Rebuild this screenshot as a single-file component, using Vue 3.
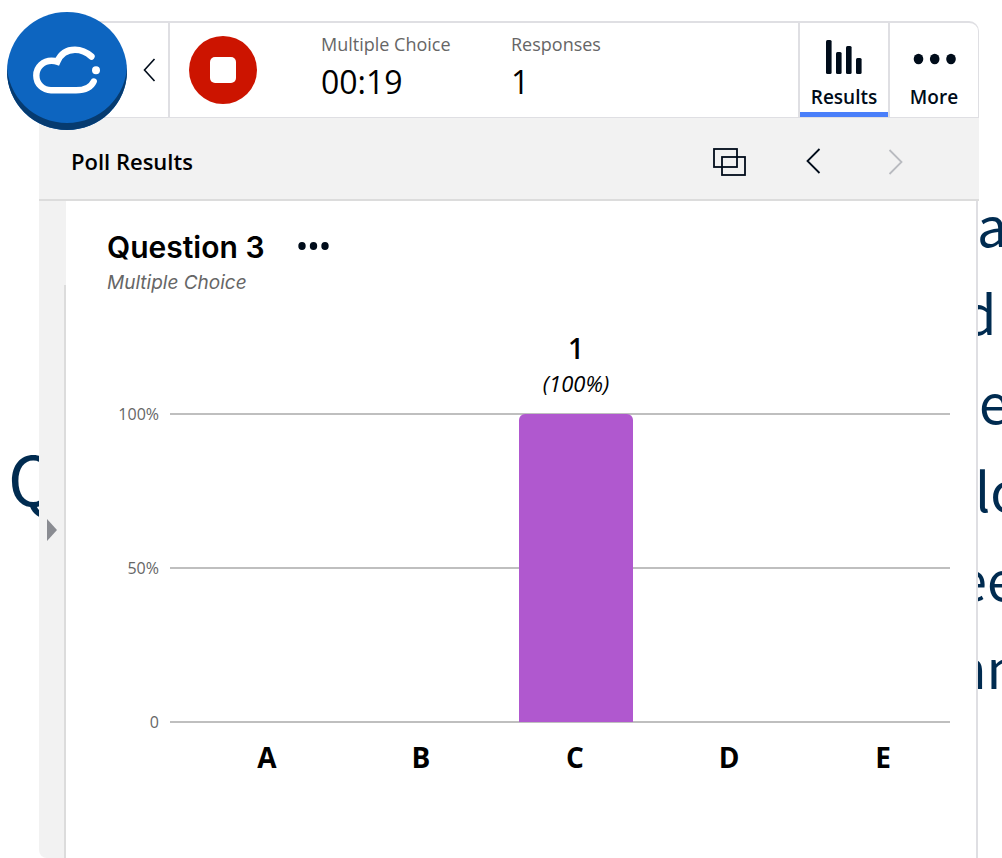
<template>
  <div class="desktop">
    <div class="slide">
      <span class="slide-title">Q</span>
      <span
        v-for="line in slideLines"
        :key="line.top"
        class="slide-line"
        :style="{ left: line.left + 'px', top: line.top + 'px' }"
      >{{ line.text }}</span>
    </div>

    <div class="poll-panel">
      <header class="toolbar">
        <div class="toolbar-start">
          <button class="collapse-btn" aria-label="Collapse">
            <svg width="14" height="24" viewBox="0 0 14 24" fill="none" stroke="currentColor" stroke-width="1.6">
              <path d="M12.5 1L2.5 12L12.5 23"/>
            </svg>
          </button>
        </div>

        <div class="session">
          <button class="stop-btn" aria-label="Stop">
            <span class="stop-icon"></span>
          </button>
          <div class="stat">
            <span class="stat-label">Multiple Choice</span>
            <span class="stat-value">00:19</span>
          </div>
          <div class="stat">
            <span class="stat-label">Responses</span>
            <span class="stat-value">1</span>
          </div>
        </div>

        <button class="tab active">
          <svg width="36" height="34" viewBox="0 0 36 34" fill="currentColor">
            <rect x="0" y="0" width="5.6" height="34" rx="1.5"/>
            <rect x="10" y="12" width="5.6" height="22" rx="1.5"/>
            <rect x="20" y="6" width="5.6" height="28" rx="1.5"/>
            <rect x="30" y="18" width="5.6" height="16" rx="1.5"/>
          </svg>
          <span>Results</span>
        </button>
        <button class="tab">
          <svg width="44" height="34" viewBox="0 0 44 34" fill="currentColor">
            <ellipse cx="6.5" cy="19" rx="4.8" ry="5.2"/>
            <ellipse cx="22.7" cy="19" rx="4.8" ry="5.2"/>
            <ellipse cx="39" cy="19" rx="4.8" ry="5.2"/>
          </svg>
          <span>More</span>
        </button>
      </header>

      <div class="subheader">
        <h2>Poll Results</h2>
        <div class="subheader-actions">
          <button aria-label="Compare">
            <svg width="34" height="30" viewBox="0 0 34 30" fill="none" stroke="currentColor" stroke-width="1.8">
              <rect x="2" y="3" width="23" height="18"/>
              <rect x="10" y="11" width="23" height="18"/>
            </svg>
          </button>
          <button aria-label="Previous">
            <svg width="34" height="30" viewBox="0 0 34 30" fill="none" stroke="currentColor" stroke-width="1.8">
              <path d="M24.5 3L12.5 15L24.5 27"/>
            </svg>
          </button>
          <button aria-label="Next" disabled>
            <svg width="34" height="30" viewBox="0 0 34 30" fill="none" stroke="currentColor" stroke-width="1.8">
              <path d="M11.5 4L23.5 16L11.5 28"/>
            </svg>
          </button>
        </div>
      </div>

      <div class="panel-body">
        <aside class="side-rail">
          <button class="expand-btn" aria-label="Expand">
            <svg width="10" height="22" viewBox="0 0 10 22" fill="currentColor">
              <path d="M0 0L10 11L0 22Z"/>
            </svg>
          </button>
        </aside>

        <main class="results">
          <div class="question-head">
            <h1>Question 3</h1>
            <button class="question-menu" aria-label="Question options">
              <svg width="32" height="10" viewBox="0 0 32 10" fill="currentColor">
                <ellipse cx="4" cy="4" rx="3.7" ry="4"/>
                <ellipse cx="15.5" cy="4" rx="3.7" ry="4"/>
                <ellipse cx="27" cy="4" rx="3.7" ry="4"/>
              </svg>
            </button>
          </div>
          <p class="question-type">Multiple Choice</p>

          <div class="chart">
            <div class="y-axis">
              <span v-for="tick in ticks" :key="tick">{{ tick }}</span>
            </div>
            <div class="plot">
              <div class="grid-lines">
                <i v-for="tick in ticks" :key="tick"></i>
              </div>
              <div class="bars">
                <div v-for="choice in choices" :key="choice.label" class="bar-slot">
                  <div v-if="choice.count" class="bar" :style="{ height: percent(choice) + '%' }">
                    <div class="bar-label">
                      <strong>{{ choice.count }}</strong>
                      <em>({{ percent(choice) }}%)</em>
                    </div>
                  </div>
                </div>
              </div>
            </div>
            <div class="x-axis">
              <span v-for="choice in choices" :key="choice.label">{{ choice.label }}</span>
            </div>
          </div>
        </main>
      </div>
    </div>

    <button class="launcher" aria-label="Menu">
      <svg viewBox="0 0 120 118" fill="none" stroke="#fff" stroke-width="6.4" stroke-linecap="round">
        <path d="M84.5 44.5C79.5 40 74 37.7 68 37.7C60 37.7 53.5 42 50.3 49.7C48.5 49 46.5 48.8 44.5 48.8C36.5 48.8 29.3 55 29.3 63.5C29.3 72 36 78.3 44 78.3H69C77 78.3 84 75.5 86.7 69.5"/>
        <circle cx="89" cy="58.3" r="4" fill="#fff" stroke="none"/>
      </svg>
    </button>
  </div>
</template>

<script setup>
import { ref, computed } from 'vue'

const ticks = ['100%', '50%', '0']

const choices = ref([
  { label: 'A', count: 0 },
  { label: 'B', count: 0 },
  { label: 'C', count: 1 },
  { label: 'D', count: 0 },
  { label: 'E', count: 0 }
])

const slideLines = [
  { text: 'a', left: 977, top: 180 },
  { text: 'd', left: 963, top: 268 },
  { text: 'e', left: 979, top: 357 },
  { text: 'lo', left: 975, top: 445 },
  { text: 'ee', left: 957, top: 534 },
  { text: 'an', left: 956, top: 622 }
]

const total = computed(() => choices.value.reduce((sum, c) => sum + c.count, 0))

function percent(choice) {
  return total.value ? Math.round((choice.count / total.value) * 100) : 0
}
</script>

<style>
body {
  margin: 0;
  background: #fff;
}
</style>

<style scoped>
.desktop {
  position: relative;
  display: flex;
  min-height: 100vh;
  box-sizing: border-box;
  padding: 21px 23px 0 39px;
  overflow: hidden;
  font-family: "Open Sans", "Noto Sans", sans-serif;
  color: #000;
}

button {
  padding: 0;
  border: none;
  background: none;
  font: inherit;
  color: #000c1a;
  cursor: pointer;
}

svg {
  display: block;
}

/* Slide behind the panel */
.slide {
  position: absolute;
  inset: 0;
  overflow: hidden;
  color: #002b50;
  font-family: "Noto Sans CJK SC", "Noto Sans", sans-serif;
}

.slide-title {
  position: absolute;
  left: 8px;
  top: 429px;
  font-size: 68px;
  line-height: 96px;
}

.slide-line {
  position: absolute;
  font-size: 54px;
  line-height: 88px;
}

.poll-panel {
  position: relative;
  flex: 1;
  display: flex;
  flex-direction: column;
}

.toolbar {
  display: flex;
  height: 94px;
  border: 1px solid #dfdfe3;
  border-top-width: 2px;
  border-top-right-radius: 10px;
  background: #fff;
}

.toolbar-start {
  width: 128px;
  display: flex;
  align-items: center;
  justify-content: flex-end;
  border-right: 2px solid #dfdfe3;
}

.collapse-btn {
  margin-right: 12px;
}

.session {
  flex: 1;
  display: flex;
  align-items: center;
  padding-left: 19px;
}

.stop-btn {
  width: 68px;
  height: 68px;
  margin-right: 64px;
  display: flex;
  align-items: center;
  justify-content: center;
  border-radius: 50%;
  background: #cc1400;
}

.stop-icon {
  width: 26px;
  height: 26px;
  border-radius: 5px;
  background: #fff;
}

.stat {
  width: 190px;
  display: flex;
  flex-direction: column;
  padding-bottom: 8px;
}

.stat-label {
  font-size: 18px;
  line-height: 32px;
  color: #666;
}

.stat-value {
  font-size: 32px;
  line-height: 44px;
}

.tab {
  width: 90px;
  box-sizing: border-box;
  display: flex;
  flex-direction: column;
  align-items: center;
  padding-top: 17px;
  border-left: 2px solid #dfdfe3;
  font-size: 19px;
  line-height: 28px;
  font-weight: 600;
}

.tab span {
  margin-top: 9px;
}

.tab.active {
  box-shadow: inset 0 -5px #4a7ffa;
}

.subheader {
  display: flex;
  align-items: center;
  justify-content: space-between;
  height: 76px;
  padding: 5px 67px 0 32px;
  border-bottom: 2px solid #dcdcdc;
  background: #f2f2f2;
}

.subheader h2 {
  margin: 0;
  font-size: 22px;
  line-height: 30px;
  font-weight: 600;
}

.subheader-actions {
  display: flex;
  gap: 49px;
}

.subheader-actions button:disabled {
  color: #b9bbc0;
  cursor: default;
}

.panel-body {
  flex: 1;
  display: flex;
  margin-right: 1px;
  border-right: 2px solid #dfdfe3;
  background: #fff;
}

.side-rail {
  width: 27px;
  display: flex;
  align-items: center;
  box-sizing: border-box;
  padding-left: 8px;
  border-bottom-left-radius: 8px;
  background: linear-gradient(#dcdcdc, #dcdcdc) right 84px / 2px 100% no-repeat, #f2f2f2;
}

.expand-btn {
  color: #8a8c92;
}

.results {
  flex: 1;
  padding: 26px 26px 40px 41px;
}

.question-head {
  display: flex;
  align-items: center;
  gap: 33px;
}

.question-head h1 {
  margin: 0;
  font-family: Inter, sans-serif;
  font-size: 30px;
  line-height: 40px;
  font-weight: 600;
}

.question-type {
  margin: 2px 0 0;
  font-family: Inter, sans-serif;
  font-size: 19px;
  line-height: 28px;
  font-style: italic;
  color: #666;
}

.chart {
  display: grid;
  grid-template-columns: 52px 1fr;
  column-gap: 11px;
  margin-top: 116px;
}

.y-axis {
  display: flex;
  flex-direction: column;
  justify-content: space-between;
  margin: -11px 0;
  font-size: 16px;
  line-height: 24px;
  text-align: right;
  color: #666;
}

.plot {
  display: grid;
  height: 310px;
}

.grid-lines,
.bars {
  grid-area: 1 / 1;
}

.grid-lines {
  display: flex;
  flex-direction: column;
  justify-content: space-between;
}

.grid-lines i {
  height: 2px;
  background: #bfbfbf;
}

.bars {
  display: flex;
  margin: 0 -11px 0 21px;
  padding: 1px 0;
}

.bar-slot {
  flex: 1;
  display: flex;
  align-items: flex-end;
  justify-content: center;
}

.bar {
  position: relative;
  width: 74%;
  border-radius: 6px 6px 0 0;
  background: #b058cf;
}

.bar-label {
  position: absolute;
  left: 0;
  right: 0;
  bottom: 100%;
  display: flex;
  flex-direction: column;
  align-items: center;
  padding-bottom: 15px;
}

.bar-label strong {
  font-size: 28px;
  line-height: 38px;
  font-weight: 600;
}

.bar-label em {
  font-size: 22px;
  line-height: 32px;
}

.x-axis {
  grid-column: 2;
  display: flex;
  margin: 14px -10px 0 20px;
}

.x-axis span {
  flex: 1;
  font-size: 28px;
  line-height: 40px;
  font-weight: 700;
  text-align: center;
}

/* Round launcher over the toolbar corner */
.launcher {
  position: absolute;
  left: 7px;
  top: 12px;
  width: 120px;
  height: 118px;
  border-radius: 50%;
  background: #0d65c0;
  box-shadow: inset 0 -7px #063b70;
}
</style>
